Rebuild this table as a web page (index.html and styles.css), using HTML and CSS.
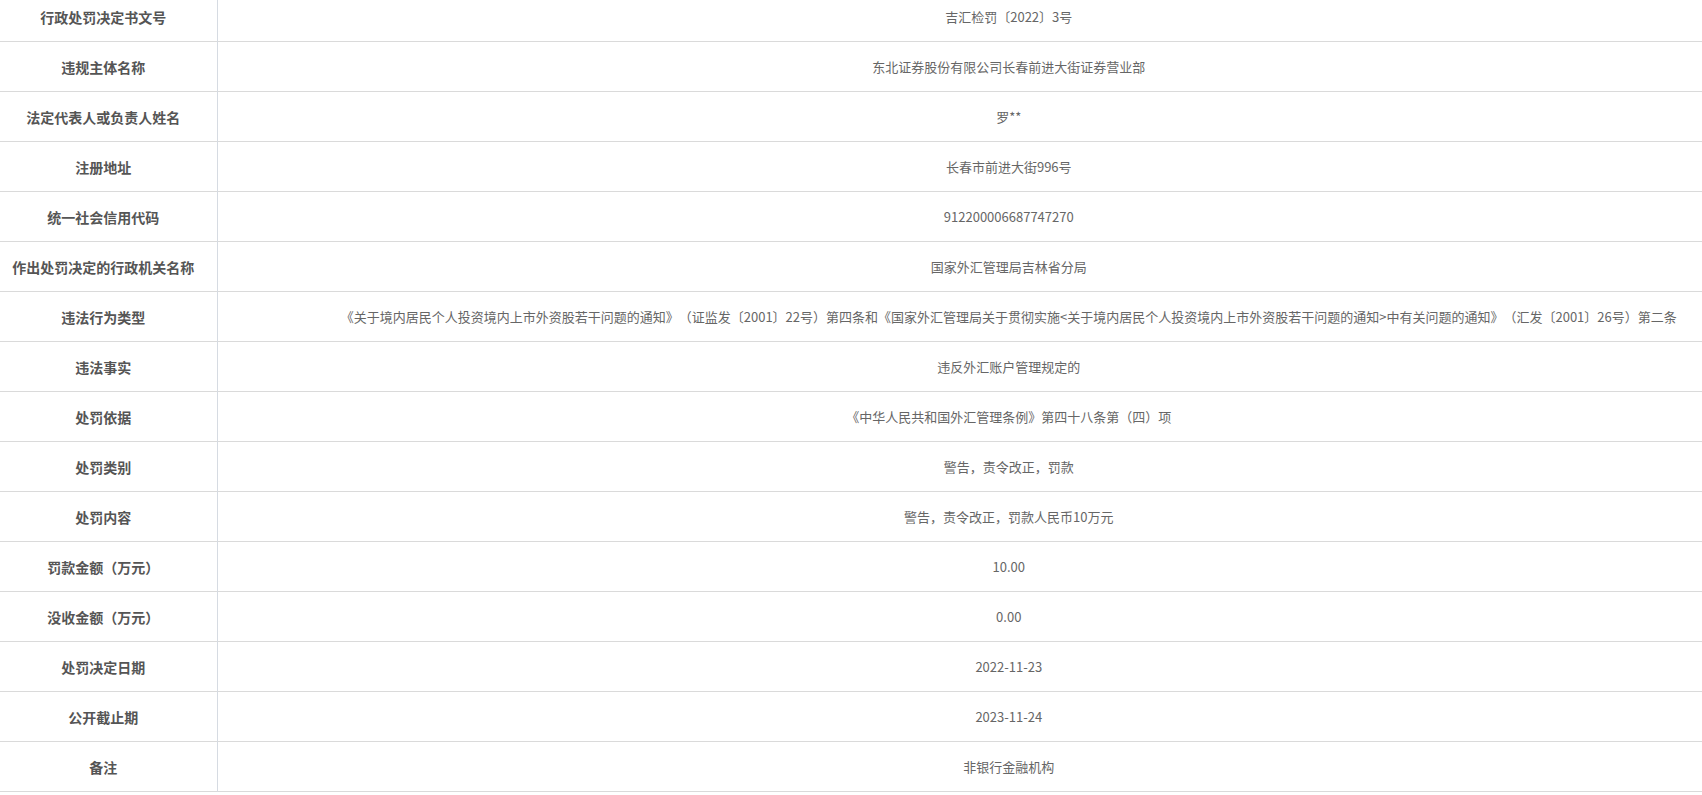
FILE: index.html
```html
<!DOCTYPE html>
<html lang="zh-CN">
<head>
<meta charset="utf-8">
<title>行政处罚信息</title>
<link rel="stylesheet" href="styles.css">
</head>
<body>
<table class="info">
<tbody>
<tr><th>行政处罚决定书文号</th><td>吉汇检罚〔2022〕3号</td></tr>
<tr><th>违规主体名称</th><td>东北证券股份有限公司长春前进大街证券营业部</td></tr>
<tr><th>法定代表人或负责人姓名</th><td>罗**</td></tr>
<tr><th>注册地址</th><td>长春市前进大街996号</td></tr>
<tr><th>统一社会信用代码</th><td>912200006687747270</td></tr>
<tr><th>作出处罚决定的行政机关名称</th><td>国家外汇管理局吉林省分局</td></tr>
<tr><th>违法行为类型</th><td>《关于境内居民个人投资境内上市外资股若干问题的通知》（证监发〔2001〕22号）第四条和《国家外汇管理局关于贯彻实施&lt;关于境内居民个人投资境内上市外资股若干问题的通知&gt;中有关问题的通知》（汇发〔2001〕26号）第二条</td></tr>
<tr><th>违法事实</th><td>违反外汇账户管理规定的</td></tr>
<tr><th>处罚依据</th><td>《中华人民共和国外汇管理条例》第四十八条第（四）项</td></tr>
<tr><th>处罚类别</th><td>警告，责令改正，罚款</td></tr>
<tr><th>处罚内容</th><td>警告，责令改正，罚款人民币10万元</td></tr>
<tr><th>罚款金额（万元）</th><td>10.00</td></tr>
<tr><th>没收金额（万元）</th><td>0.00</td></tr>
<tr><th>处罚决定日期</th><td>2022-11-23</td></tr>
<tr><th>公开截止期</th><td>2023-11-24</td></tr>
<tr><th>备注</th><td>非银行金融机构</td></tr>
</tbody>
</table>
</body>
</html>
```
FILE: styles.css
```css
html, body {
  margin: 0;
  padding: 0;
  background: #fff;
  overflow: hidden;
}
body {
  font-family: "Microsoft YaHei", "Noto Sans CJK SC", "Noto Sans", sans-serif;
  text-spacing-trim: space-all;
}
.info {
  border-collapse: collapse;
  width: 1800px;
  margin-top: -9px;
  table-layout: fixed;
}
.info tr {
  border-top: 1px solid #dadada;
  border-bottom: 1px solid #dadada;
}
.info th {
  width: 217px;
  height: 49px;
  padding: 0 10px 0 0;
  box-sizing: border-box;
  border-right: 1px solid #d6dbe2;
  font-size: 14px;
  font-weight: 700;
  color: #555;
  text-align: center;
  vertical-align: middle;
  white-space: nowrap;
}
.info td {
  height: 49px;
  padding: 0;
  font-size: 13px;
  color: #666;
  text-align: center;
  vertical-align: middle;
  white-space: nowrap;
}
```
